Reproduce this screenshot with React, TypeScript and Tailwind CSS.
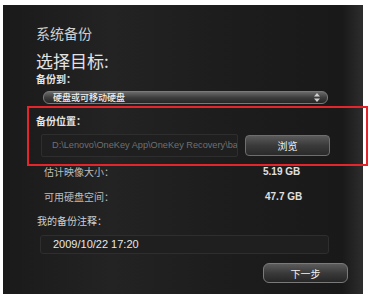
import React from 'react'

const cjk = "font-['Noto_Sans_CJK_SC',sans-serif]"
const latin = "font-['Liberation_Sans','Noto_Sans_CJK_SC',sans-serif]"

const UpDown = () => (
  <svg width="6" height="9" viewBox="0 0 6 9" fill="#cfcfcf">
    <polygon points="3,0 6,3.5 0,3.5" />
    <polygon points="0,5.5 6,5.5 3,9" />
  </svg>
)

export default function App() {
  return (
    <div className="relative w-[369px] h-[300px] bg-white overflow-hidden pt-[5px] pl-[3px]">
      {/* dialog panel */}
      <div
        className={`w-[360px] h-[289px] flex flex-col pt-[20px] pl-[33px] bg-[linear-gradient(90deg,#1a1a1a_0%,#232323_30%,#1d1d1d_60%,#191919_95%,#2a2a2a_100%)] border-r-[3px] border-[#2c2c2c] ${cjk}`}
      >
        <div className="h-[16px] leading-[16px] text-[14px] text-[#cfcfcf]">系统备份</div>

        <div className="mt-[11px] h-[18px] leading-[18px] text-[17px] text-[#e2e2e2]">选择目标:</div>

        <div className="mt-[3px] h-[11px] leading-[11px] text-[10px] font-bold text-[#e6e6e6]">备份到：</div>

        {/* drop-down */}
        <div className="mt-[7px] ml-[7px] w-[285px] h-[13px] flex items-center justify-between pl-[9px] pr-[7px] rounded-[6px] border border-[#7a7a7a] bg-[linear-gradient(180deg,#6a6a6a_0%,#3e3e3e_50%,#262626_100%)]">
          <span className="text-[9px] leading-[11px] font-medium text-[#f0f0f0]">硬盘或可移动硬盘</span>
          <UpDown />
        </div>

        <div className="mt-[11px] h-[12px] leading-[12px] text-[10px] font-bold text-[#e6e6e6]">备份位置：</div>

        {/* location row */}
        <div className="mt-[7px] ml-[5px] flex items-center gap-[7px]">
          <div className="w-[197px] h-[23px] flex items-center pl-[10px] overflow-hidden whitespace-nowrap rounded-[2px] border border-[#2e2e2e] bg-[#1f1f1f]">
            <span className={`text-[9.2px] text-[#707070] ${latin}`}>D:\Lenovo\OneKey App\OneKey Recovery\bac</span>
          </div>
          <div className="w-[85px] h-[21px] flex items-center justify-center rounded-[4px] border border-[#6e6e6e] bg-[linear-gradient(180deg,#5a5a5a_0%,#3a3a3a_50%,#2a2a2a_100%)] text-[10px] text-[#f2f2f2]">
            浏览
          </div>
        </div>

        <div className="mt-[7px] ml-[8px] h-[12px] grid grid-cols-[219px_auto] items-center text-[10px] text-[#bdbdbd]">
          <span>估计映像大小：</span>
          <span className={`font-bold text-[#e0e0e0] ${latin}`}>5.19 GB</span>
        </div>

        <div className="mt-[13px] ml-[8px] h-[12px] grid grid-cols-[221px_auto] items-center text-[10px] text-[#bdbdbd]">
          <span>可用硬盘空间：</span>
          <span className={`font-bold text-[#e0e0e0] ${latin}`}>47.7 GB</span>
        </div>

        <div className="mt-[14px] ml-[1px] h-[12px] leading-[12px] text-[10px] text-[#cfcfcf]">我的备份注释：</div>

        <div className="mt-[8px] ml-[4px] w-[289px] h-[19px] flex items-center pl-[12px] rounded-[3px] border border-[#2e2e2e] bg-[#1f1f1f]">
          <span className={`text-[11px] text-[#e8e8e8] ${latin}`}>2009/10/22 17:20</span>
        </div>

        <div className="mt-[9px] self-end mr-[12px] w-[85px] h-[20px] flex items-center justify-center rounded-[6px] border border-[#7a7a7a] bg-[linear-gradient(180deg,#5c5c5c_0%,#3a3a3a_50%,#262626_100%)] text-[10px] text-[#f2f2f2]">
          下一步
        </div>
      </div>

      {/* red annotation frame */}
      <div className="absolute left-[27px] top-[106px] w-[341px] h-[60px] border-2 border-[#e3262b] pointer-events-none" />
    </div>
  )
}
